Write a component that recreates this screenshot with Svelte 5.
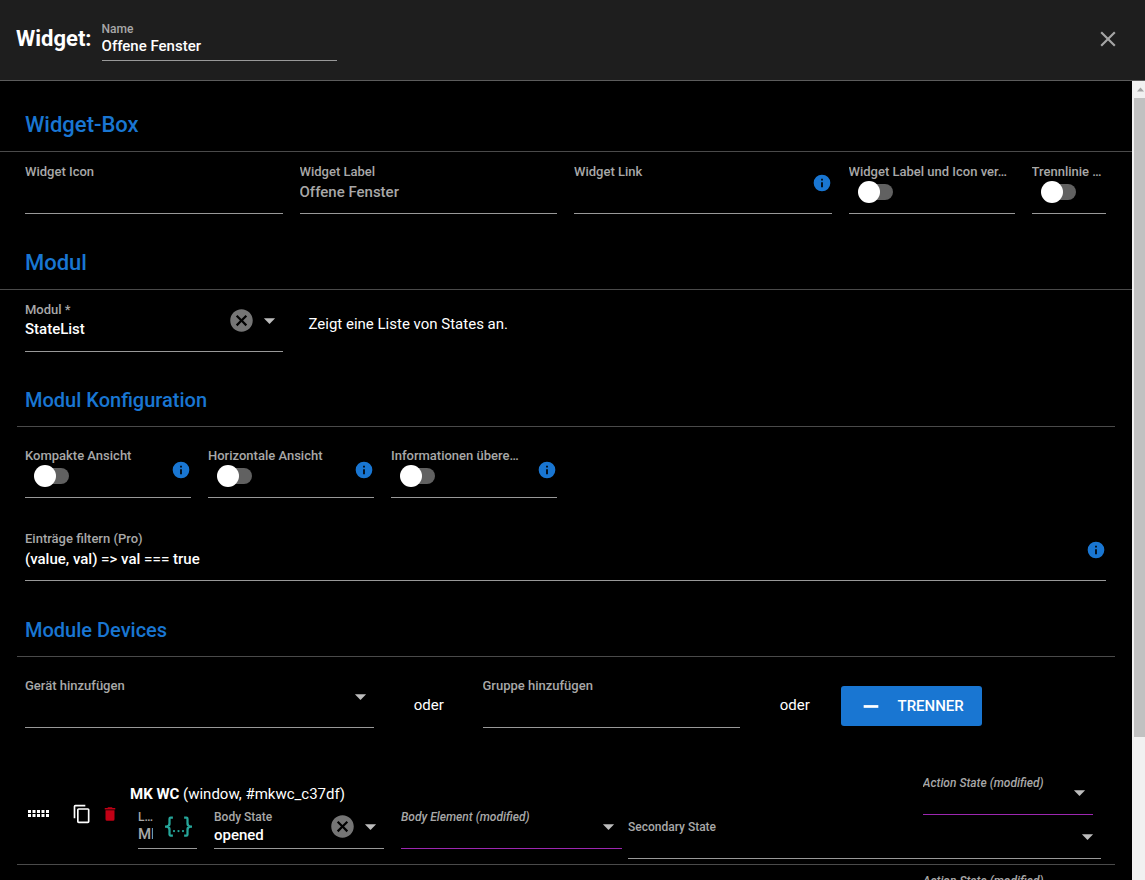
<script>
  const INFO =
    'M13 9h-2V7h2m0 10h-2v-6h2m-1-9A10 10 0 0 0 2 12a10 10 0 0 0 10 10 10 10 0 0 0 10-10A10 10 0 0 0 12 2z';
  const CANCEL =
    'M12 2C6.47 2 2 6.47 2 12s4.47 10 10 10 10-4.47 10-10S17.53 2 12 2zm5 13.59L15.59 17 12 13.41 8.41 17 7 15.59 10.59 12 7 8.41 8.41 7 12 10.59 15.59 7 17 8.41 13.41 12 17 15.59z';
  const CLOSE =
    'M19 6.41L17.59 5 12 10.59 6.41 5 5 6.41 10.59 12 5 17.59 6.41 19 12 13.41 17.59 19 19 17.59 13.41 12z';
  const ARROW = 'M7 10l5 5 5-5z';
  const COPY =
    'M19 21H8V7h11m0-2H8a2 2 0 0 0-2 2v14a2 2 0 0 0 2 2h11a2 2 0 0 0 2-2V7a2 2 0 0 0-2-2m-3-4H4a2 2 0 0 0-2 2v14h2V3h12V1z';
  const TRASH = 'M19 4h-3.5l-1-1h-5l-1 1H5v2h14M6 19a2 2 0 0 0 2 2h8a2 2 0 0 0 2-2V7H6v12z';
  const JSON_ICON =
    'M5 3h2v2H5v5a2 2 0 0 1-2 2 2 2 0 0 1 2 2v5h2v2H5c-1.07-.27-2-.9-2-2v-4a2 2 0 0 0-2-2H0v-2h1a2 2 0 0 0 2-2V5a2 2 0 0 1 2-2m14 0a2 2 0 0 1 2 2v4a2 2 0 0 0 2 2h1v2h-1a2 2 0 0 0-2 2v4a2 2 0 0 1-2 2h-2v-2h2v-5a2 2 0 0 1 2-2 2 2 0 0 1-2-2V5h-2V3h2m-7 12a1 1 0 1 1 0 2 1 1 0 0 1 0-2m-4 0a1 1 0 1 1 0 2 1 1 0 0 1 0-2m8 0a1 1 0 1 1 0 2 1 1 0 0 1 0-2z';

  const devices = [
    { id: 'd1', name: 'MK WC', info: '(window, #mkwc_c37df)', state: 'opened' },
    { id: 'd2', name: 'MK WC', info: '(window, #mkwc_c37df)', state: 'opened' }
  ];
</script>

{#snippet icon(path, cls)}
  <svg class="icon {cls}" viewBox="0 0 24 24" aria-hidden="true"><path d={path} /></svg>
{/snippet}

{#snippet textField(id, label, value, cls, info)}
  <div class="field {cls}">
    <div class="control">
      <label for={id}>{label}</label>
      <input type="text" {id} {value} />
    </div>
    {#if info}<span class="trail">{@render icon(INFO, 'info')}</span>{/if}
  </div>
{/snippet}

{#snippet toggleField(id, label, cls, info)}
  <div class="field {cls}">
    <div class="control">
      <label for={id}>{label}</label>
      <input class="toggle" type="checkbox" role="switch" {id} />
    </div>
    {#if info}<span class="trail">{@render icon(INFO, 'info')}</span>{/if}
  </div>
{/snippet}

{#snippet selectField(id, label, value, cls, clearable)}
  <div class="field {cls}">
    <div class="control">
      <label for={id}>{label}</label>
      <select {id}><option>{value}</option></select>
    </div>
    <span class="trail">
      {#if clearable}
        <button class="plain" aria-label="Leeren">{@render icon(CANCEL, 'cancel')}</button>
      {/if}
      {@render icon(ARROW, 'arrow')}
    </span>
  </div>
{/snippet}

<div class="page">
  <header>
    <h1>Widget:</h1>
    {@render textField('name', 'Name', 'Offene Fenster', 'dense name', false)}
    <button class="plain close" aria-label="Schließen">{@render icon(CLOSE, 'x')}</button>
  </header>

  <div class="body">
    <main>
      <h2>Widget-Box</h2>
      <div class="row">
        <div class="c3">{@render textField('w-icon', 'Widget Icon', '', '', false)}</div>
        <div class="c3">{@render textField('w-label', 'Widget Label', 'Offene Fenster', 'muted', false)}</div>
        <div class="c3">{@render textField('w-link', 'Widget Link', '', '', true)}</div>
        <div class="c2">{@render toggleField('w-swap', 'Widget Label und Icon ver…', '', false)}</div>
        <div class="c1">{@render toggleField('w-line', 'Trennlinie …', '', false)}</div>
      </div>

      <h2>Modul</h2>
      <div class="row">
        <div class="c3">{@render selectField('modul', 'Modul *', 'StateList', '', true)}</div>
        <p class="note">Zeigt eine Liste von States an.</p>
      </div>

      <h3>Modul Konfiguration</h3>
      <div class="row spaced">
        <div class="c2">{@render toggleField('compact', 'Kompakte Ansicht', 'low', true)}</div>
        <div class="c2">{@render toggleField('horizontal', 'Horizontale Ansicht', 'low', true)}</div>
        <div class="c2">{@render toggleField('override', 'Informationen übere…', 'low', true)}</div>
      </div>
      <div class="row filter">
        <div class="c12">{@render textField('filter', 'Einträge filtern (Pro)', '(value, val) => val === true', '', true)}</div>
      </div>

      <h3>Module Devices</h3>
      <div class="row spaced">
        <div class="c4">{@render selectField('add-device', 'Gerät hinzufügen', '', '', false)}</div>
        <span class="c1 or">oder</span>
        <div class="c3">{@render textField('add-group', 'Gruppe hinzufügen', '', '', false)}</div>
        <span class="c1 or">oder</span>
        <button class="divider-btn">
          <svg class="icon minus" viewBox="0 0 24 24" aria-hidden="true"><path d="M4 11h16v3H4z" /></svg>
          <span>TRENNER</span>
        </button>
      </div>

      <ul class="devices">
        {#each devices as d (d.id)}
          <li>
            <div class="tools">
              <svg class="grip" viewBox="0 0 21 8" aria-hidden="true">
                {#each [0, 4.5, 9, 13.5, 18] as x}
                  <rect {x} y="0" width="3" height="3" />
                  <rect {x} y="4" width="3" height="3" />
                {/each}
              </svg>
              <button class="plain" aria-label="Kopieren">{@render icon(COPY, 'copy')}</button>
              <button class="plain" aria-label="Löschen">{@render icon(TRASH, 'trash')}</button>
            </div>
            <div class="left">
              <p class="title"><strong>{d.name}</strong> {d.info}</p>
              <div class="fields">
                <div class="field dense muted tiny">
                  <div class="control">
                    <label for="{d.id}-label">L…</label>
                    <input type="text" id="{d.id}-label" value={d.name} />
                  </div>
                  <button class="plain trail" aria-label="JSON">{@render icon(JSON_ICON, 'json')}</button>
                </div>
                {@render selectField(`${d.id}-state`, 'Body State', d.state, 'dense', true)}
                {@render selectField(`${d.id}-element`, 'Body Element (modified)', '', 'dense modified', false)}
              </div>
            </div>
            <div class="right">
              {@render selectField(`${d.id}-action`, 'Action State (modified)', '', 'dense modified action', false)}
              {@render selectField(`${d.id}-second`, 'Secondary State', '', 'dense', false)}
            </div>
          </li>
        {/each}
      </ul>
    </main>
    <div class="scrollbar" aria-hidden="true">
      <svg viewBox="0 0 17 17"><path d="M5 10.500h7L8.500 6.500z" /></svg>
      <div class="thumb"></div>
    </div>
  </div>
</div>

<style>
  :global(body) {
    margin: 0;
    background: #000;
  }
  .page {
    display: flex;
    flex-direction: column;
    height: 100vh;
    overflow: hidden;
    background: #000;
    color: #fff;
    font: 500 15px/20px Roboto, sans-serif;
  }
  .page :where(*) {
    box-sizing: border-box;
  }
  h1, h2, h3, p, ul {
    margin: 0;
  }
  header {
    display: flex;
    align-items: center;
    flex: none;
    padding: 21px 24px 19px 16px;
    border-bottom: 1px solid #5c5c5c;
    background: #1e1e1e;
  }
  h1 {
    margin-right: 10px;
    padding-bottom: 4px;
    font-size: 22px;
    font-weight: 700;
    line-height: 32px;
  }
  .body {
    display: flex;
    flex: 1;
    min-height: 0;
  }
  main {
    flex: 1;
    min-width: 0;
    overflow: hidden;
  }
  h2, h3 {
    color: #1976d2;
    font-weight: 500;
    border-bottom: 1px solid #4a4a4a;
  }
  h2 {
    padding: 28px 25px 10px;
    font-size: 22px;
    line-height: 32px;
  }
  h3 {
    margin: 0 17px;
    padding: 27px 8px 10px;
    font-size: 20px;
    line-height: 32px;
  }
  .row {
    display: grid;
    grid-template-columns: repeat(12, minmax(0, 1fr));
    padding: 6px 17px 5px;
  }
  .row.spaced {
    padding-top: 15px;
    padding-bottom: 0;
  }
  .row.filter {
    padding-top: 27px;
    padding-bottom: 6px;
  }
  .row > div {
    padding: 0 9px 0 8px;
  }
  .c1 { grid-column: span 1; }
  .c2 { grid-column: span 2; }
  .c3 { grid-column: span 3; }
  .c4 { grid-column: span 4; }
  .c12 { grid-column: span 12; }

  .field {
    display: flex;
    height: 56px;
    border-bottom: 1px solid #999;
  }
  .field.name {
    flex: 0 1 235px;
  }
  .control {
    flex: 1;
    min-width: 0;
    padding-top: 6px;
  }
  label {
    display: block;
    overflow: hidden;
    color: #a8a8a8;
    font-size: 13px;
    line-height: 16px;
    text-overflow: ellipsis;
    white-space: nowrap;
  }
  input, select {
    display: block;
    width: 100%;
    height: 24px;
    margin: 0;
    padding: 0;
    border: 0;
    outline: 0;
    appearance: none;
    background: none;
    color: #fff;
    font: inherit;
  }
  select {
    height: 22px;
  }
  .muted input {
    color: #a8a8a8;
  }
  .trail {
    display: flex;
    align-items: center;
    flex: none;
    gap: 1px;
    padding: 0 0 6px 12px;
  }
  .low .trail {
    padding-bottom: 0;
  }
  .dense {
    height: 40px;
  }
  .dense .control {
    padding-top: 0;
  }
  .dense label {
    font-size: 12px;
  }
  .dense input, .dense select {
    height: 18px;
  }
  .dense .trail {
    padding-bottom: 4px;
  }
  .field.modified {
    border-bottom-color: #9c27b0;
  }
  .modified label {
    font-style: italic;
  }
  .toggle {
    position: relative;
    width: 32px;
    height: 16px;
    margin: 4px 0 0 12px;
    border-radius: 8px;
    background: #616161;
  }
  .toggle::before {
    content: '';
    position: absolute;
    top: -3px;
    left: -3px;
    width: 22px;
    height: 22px;
    border-radius: 50%;
    background: #fff;
  }
  .plain {
    display: flex;
    border: 0;
    background: none;
    padding: 0;
    color: inherit;
  }
  .close {
    margin-left: auto;
    padding-bottom: 4px;
  }
  .icon {
    display: block;
    flex: none;
    fill: currentColor;
  }
  .info { width: 20px; height: 20px; color: #1976d2; }
  .cancel { width: 27px; height: 27px; color: #757575; }
  .arrow { width: 27px; height: 27px; color: #bdbdbd; }
  .x { width: 26px; height: 26px; color: #a5a5a5; }
  .copy { width: 20px; height: 20px; }
  .trash { width: 18px; height: 18px; color: #c10015; }
  .json { width: 27px; height: 27px; color: #26a69a; }
  .minus { width: 22px; height: 22px; }

  .note {
    grid-column: span 9;
    padding: 18px 17px;
    font-weight: 400;
  }
  .or {
    align-self: center;
    padding-top: 10px;
    font-weight: 400;
    text-align: center;
  }
  .divider-btn {
    display: flex;
    grid-column: span 3;
    align-items: center;
    gap: 16px;
    width: max-content;
    height: 40px;
    margin-top: 14px;
    padding: 0 18px 0 19px;
    border: 0;
    border-radius: 3px;
    background: #1976d2;
    color: #fff;
    font: inherit;
  }
  .devices {
    padding: 39px 17px 0;
    list-style: none;
  }
  li {
    display: flex;
    border-bottom: 1px solid #4a4a4a;
    padding-right: 14px;
  }
  .tools {
    display: flex;
    align-items: center;
    flex: none;
    width: 113px;
    padding: 0 0 4px 11px;
  }
  .grip {
    width: 21px;
    height: 8px;
    margin-right: 23px;
    fill: #fff;
  }
  .tools .plain + .plain {
    margin-left: 9px;
  }
  .left {
    flex: 492 1 0;
    min-width: 0;
    padding-top: 17px;
  }
  .title {
    font-weight: 400;
  }
  .title strong {
    font-weight: 700;
  }
  .fields {
    display: grid;
    grid-template-columns: minmax(0, 59fr) minmax(0, 170fr) minmax(0, 221fr);
    gap: 17px;
    padding: 5px 0 15px 8px;
  }
  .tiny .trail {
    padding-left: 12px;
    padding-right: 5px;
  }
  .right {
    display: flex;
    flex: 473 1 0;
    flex-direction: column;
    gap: 4px;
    min-width: 0;
    margin-left: 6px;
    padding: 8px 0 5px;
  }
  .action {
    align-self: flex-end;
    width: 36%;
    margin-right: 8px;
  }
  .scrollbar {
    flex: none;
    width: 13px;
    overflow: hidden;
    background: #f1f1f1;
  }
  .scrollbar svg {
    display: block;
    width: 17px;
    height: 17px;
    fill: #a3a3a3;
  }
  .thumb {
    height: 80%;
    margin-left: 2px;
    background: #c1c1c1;
  }
</style>
